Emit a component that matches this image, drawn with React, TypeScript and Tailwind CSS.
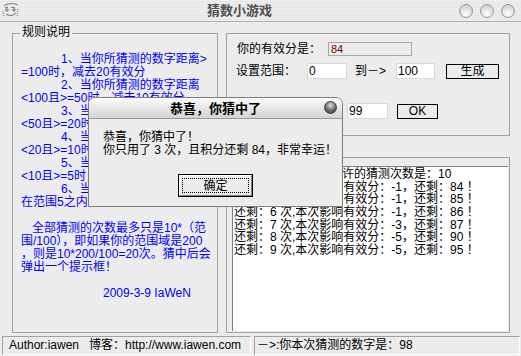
import React from "react";

// 规则说明 lines: [indent px, text]
const rules: [number, string][] = [
  [40, "1、当你所猜测的数字距离>"],
  [0, "=100时，减去20有效分"],
  [40, "2、当你所猜测的数字距离"],
  [0, "<100且>=50时，减去10有效分"],
  [40, "3、当你所猜测的数字距离"],
  [0, "<50且>=20时，减去5有效分"],
  [40, "4、当你所猜测的数字距离"],
  [0, "<20且>=10时，减去3有效分"],
  [40, "5、当你所猜测的数字距离"],
  [0, "<10且>=5时，减去2有效分"],
  [40, "6、当你所猜测的数字距离"],
  [0, "在范围5之内，减去1有效分"],
  [0, ""],
  [11, "全部猜测的次数最多只是10*（范"],
  [0, "围/100），即如果你的范围域是200"],
  [0, "，则是10*200/100=20次。猜中后会"],
  [0, "弹出一个提示框！"],
  [0, ""],
  [82, "2009-3-9 IaWeN"],
];

// 猜测记录
const records: string[] = [
  "本次游戏中，系统允许的猜测次数是：10",
  "还剩：4 次,本次影响有效分：-1，还剩：84 ！",
  "还剩：5 次,本次影响有效分：-1，还剩：85 ！",
  "还剩：6 次,本次影响有效分：-1，还剩：86 ！",
  "还剩：7 次,本次影响有效分：-3，还剩：87 ！",
  "还剩：8 次,本次影响有效分：-5，还剩：90 ！",
  "还剩：9 次,本次影响有效分：-5，还剩：95 ！",
];

function AppIcon() {
  return (
    <svg width="18" height="17" viewBox="0 0 18 17" fill="none" stroke="#6b6b6b" strokeWidth="1">
      <path d="M2 4 C5 1, 12 1, 16 3" />
      <path d="M3 6 L6 5 M9 5 L13 6" />
      <circle cx="5" cy="8" r="1.2" />
      <circle cx="12" cy="8" r="1.2" />
      <path d="M4 12 C7 14, 11 14, 14 11" />
      <path d="M1 9 L2 15 M16 7 L15 15" strokeDasharray="1 1" />
    </svg>
  );
}

function TrafficDot() {
  return (
    <div className="w-[14px] h-[14px] rounded-full border border-[#9a9a9a] bg-[radial-gradient(circle_at_50%_75%,#ffffff,#dedede_55%,#c4c4c4)]" />
  );
}

export default function App() {
  return (
    <div className="relative w-[521px] h-[356px] overflow-hidden bg-[#ececec] flex flex-col font-['Liberation_Sans','Noto_Sans_CJK_SC',sans-serif] text-[12px] text-black">
      {/* 标题栏 */}
      <div className="h-[22px] shrink-0 flex items-center border-b border-[#b0b0b0] bg-[repeating-linear-gradient(180deg,#efefef_0px,#efefef_1px,#e5e5e5_1px,#e5e5e5_2px)]">
        <div className="w-[20px] pl-[2px] flex items-center">
          <AppIcon />
        </div>
        <div className="flex-1 text-center font-bold text-[13px] leading-[21px] text-[#505050]">猜数小游戏</div>
        <div className="flex gap-[7px] pr-[6px]">
          <TrafficDot />
          <TrafficDot />
          <TrafficDot />
        </div>
      </div>

      {/* 主体 */}
      <div className="flex-1 flex items-start pl-[12px] pt-[11px] gap-[8px]">
        {/* 规则说明 */}
        <div className="w-[206px] h-[300px] border border-[#a0a0a0]">
          <div className="w-fit ml-[7px] px-[2px] -mt-[8px] leading-[13px] bg-[#ececec]">规则说明</div>
          <div className="mt-[14px] pl-[8px] text-[#0000ff]">
            {rules.map(([indent, text], i) => (
              <div key={i} className="h-[13px] leading-[13px] whitespace-pre" style={{ paddingLeft: indent }}>
                {text}
              </div>
            ))}
          </div>
        </div>

        {/* 右侧 */}
        <div className="w-[284px] flex flex-col">
          <div className="h-[103px] border border-[#a0a0a0]">
            <div className="flex items-center mt-[8px] h-[14px]">
              <div className="ml-[10px] w-[91px] leading-[14px]">你的有效分是：</div>
              <div className="w-[84px] h-[14px] border border-[#a8a8a8] pl-[2px] text-[11px] leading-[12px] text-[#7a0000]">84</div>
            </div>
            <div className="flex items-center mt-[7px] h-[16px]">
              <div className="ml-[9px] w-[71px] leading-[16px]">设置范围：</div>
              <div className="w-[40px] h-[16px] bg-white border border-[#d8d8d8] pl-[1px] leading-[14px]">0</div>
              <div className="ml-[8px] w-[41px] leading-[16px]">到－&gt;</div>
              <div className="w-[39px] h-[16px] bg-white border border-[#d8d8d8] pl-[1px] leading-[14px]">100</div>
              <div className="ml-[11px] w-[53px] h-[15px] border border-black flex items-center justify-center leading-none">生成</div>
            </div>
            <div className="flex items-center mt-[24px] h-[16px] pl-[120px]">
              <div className="w-[41px] h-[16px] bg-white border border-[#d8d8d8] pl-[1px] leading-[14px]">99</div>
              <div className="ml-[9px] w-[41px] h-[15px] border border-black flex items-center justify-center leading-none">OK</div>
            </div>
          </div>

          <div className="mt-[21px] h-[176px] border border-[#a0a0a0]">
            <div className="ml-[5px] mt-[8px] w-[276px] h-[165px] bg-white border-t border-l border-[#808080] pt-[1px] pl-[1px]">
              {records.map((r, i) => (
                <div key={i} className="h-[12.67px] leading-[12.67px] whitespace-pre">
                  {r}
                </div>
              ))}
            </div>
          </div>
        </div>
      </div>

      {/* 状态栏 */}
      <div className="h-[20px] shrink-0 flex gap-[3px] pl-[2px]">
        <div className="w-[249px] h-[19px] border border-[#a0a0a0] border-b-white border-r-white pl-[6px] leading-[17px] whitespace-pre">
          Author:iawen   博客：http://www.iawen.com
        </div>
        <div className="w-[266px] h-[19px] border border-[#a0a0a0] border-b-white border-r-white pl-[2px] leading-[17px]">
          －&gt;:你本次猜测的数字是：98
        </div>
      </div>

      {/* 提示框 */}
      <div className="absolute left-[88px] top-[97px] w-[255px] h-[110px] bg-[#ececec] border border-[#7d7d7d] rounded-t-[7px]">
        <div className="relative h-[21px] rounded-t-[6px] bg-gradient-to-b from-[#fbfbfb] to-[#d4d4d4] border-b border-[#9a9a9a] flex items-center justify-center font-bold text-[13px] leading-none">
          恭喜，你猜中了
          <div className="absolute right-[5px] top-[3px] w-[13px] h-[13px] rounded-full border border-[#3a3a3a] bg-[radial-gradient(circle_at_50%_30%,#e0e0e0,#6a6a6a_55%,#333333)]" />
        </div>
        <div className="pl-[14px] pt-[12px]">
          <div className="h-[13px] leading-[13px]">恭喜，你猜中了！</div>
          <div className="h-[13px] leading-[13px] whitespace-pre">你只用了 3 次，且积分还剩 84，非常幸运！</div>
        </div>
        <div className="mx-auto mt-[17px] w-[75px] h-[23px] border border-black">
          <div className="h-full border border-white border-b-[#808080] border-r-[#808080] p-[2px]">
            <div className="h-full border border-dotted border-black flex items-center justify-center leading-none">确定</div>
          </div>
        </div>
      </div>
    </div>
  );
}
